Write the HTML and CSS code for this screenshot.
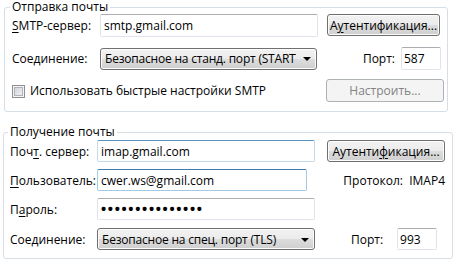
FILE: index.html
```html
<!DOCTYPE html>
<html lang="ru">
<head>
  <meta charset="UTF-8">
  <title>Настройки почты</title>
  <link rel="stylesheet" href="styles.css">
</head>
<body>
  <!-- Отправка почты -->
  <fieldset class="group group-send">
    <legend>Отправка почты</legend>
    <div class="row row-first">
      <label class="caption" for="smtpServer"><u>S</u>MTP-сервер:</label>
      <input class="textbox wide" type="text" id="smtpServer" value="smtp.gmail.com" readonly>
      <button class="btn btn-auth" type="button">А<u>у</u>тентификация...</button>
    </div>
    <div class="row row-conn">
      <span class="caption">Соединение:</span>
      <div class="combo"><span class="combo-text">Безопасное на станд. порт (STARTTLS)</span><span class="combo-arrow"></span></div>
      <span class="port-caption">Порт:</span>
      <input class="textbox port" type="text" value="587" readonly>
    </div>
    <div class="row row-quick">
      <label class="check"><span class="check-box"></span>Использовать быстрые настройки SMTP</label>
      <button class="btn btn-setup" type="button" disabled>Настроить...</button>
    </div>
  </fieldset>

  <!-- Получение почты -->
  <fieldset class="group group-recv">
    <legend>Получение почты</legend>
    <div class="row row-first">
      <label class="caption" for="imapServer">Поч<u>т</u>. сервер:</label>
      <input class="textbox wide hover" type="text" id="imapServer" value="imap.gmail.com" readonly>
      <button class="btn btn-auth" type="button">Аутенти<u>ф</u>икация...</button>
    </div>
    <div class="row">
      <label class="caption" for="user"><u>П</u>ользователь:</label>
      <input class="textbox wide focus" type="text" id="user" value="cwer.ws@gmail.com" readonly>
      <span class="protocol">Протокол:&nbsp; IMAP4</span>
    </div>
    <div class="row">
      <label class="caption" for="pass">П<u>а</u>роль:</label>
      <input class="textbox wide pass" type="password" id="pass" value="xxxxxxxxxxxxxxx" readonly>
    </div>
    <div class="row row-conn">
      <span class="caption">Соединение:</span>
      <div class="combo"><span class="combo-text">Безопасное на спец. порт (TLS)</span><span class="combo-arrow"></span></div>
      <span class="port-caption">Порт:</span>
      <input class="textbox port" type="text" value="993" readonly>
    </div>
  </fieldset>
</body>
</html>
```

FILE: styles.css
```css
/* Общие стили */
body {
  margin: 0;
  background: #fff;
  color: #000;
  font-family: 'Open Sans', 'Noto Sans', sans-serif;
  font-size: 12px;
}
u {
  text-decoration-thickness: 1px;
  text-underline-offset: 2px;
}
/* Группы */
.group {
  box-sizing: border-box;
  min-inline-size: 0;
  border: 1px solid #d5dfe5;
  border-radius: 3px;
}
.group legend {
  padding: 0 2px;
  margin-left: -2px;
  line-height: 14px;
}
.group-send {
  width: 444px;
  margin: 0 0 0 4px;
  padding: 0 6px 9px 7px;
}
.group-recv {
  width: 450px;
  margin: 13px 0 0 3px;
  padding: 0 7px 8px 6px;
}
.row {
  display: flex;
  align-items: center;
  height: 23px;
  white-space: nowrap;
}
.group-send .row-first {
  height: 24px;
  margin-top: -1px;
}
.group-send .row-conn {
  margin-top: 10px;
}
.group-send .row-quick {
  margin-top: 9px;
}
.group-recv .row {
  height: 22px;
  margin-top: 7px;
}
.group-recv .row-first {
  margin-top: 1px;
}
.group-recv .row-conn {
  margin-top: 8px;
}
.caption {
  width: 88px;
  flex: none;
}
.group-recv .caption {
  width: 87px;
}
/* Поля ввода */
.textbox {
  box-sizing: border-box;
  height: 23px;
  margin: 0;
  padding: 0 3px;
  font: inherit;
  color: #000;
  background: #fff;
  border: 1px solid #e2e3ea;
  border-top-color: #abadb3;
  border-radius: 2px;
  outline: none;
}
.group-recv .textbox {
  height: 22px;
}
.textbox.wide {
  width: 218px;
}
.textbox.hover {
  border-color: #c5daed;
  border-top-color: #5794bf;
}
.textbox.focus {
  border-color: #a4c9e3;
  border-top-color: #3d7bad;
}
.textbox.pass {
  font-size: 19px;
  letter-spacing: -0.3px;
  padding-left: 2px;
}
.textbox.port {
  width: 40px;
  padding: 0 2px;
}
/* Кнопки */
.btn {
  box-sizing: border-box;
  height: 22px;
  padding: 0;
  font: inherit;
  color: #000;
  border: 1px solid #707070;
  border-radius: 3px;
  background: linear-gradient(#f2f2f2 0%, #ebebeb 50%, #dddddd 50%, #cfcfcf 100%);
  box-shadow: inset 0 0 0 1px #fcfcfc;
}
.group-send .btn-auth {
  width: 113px;
  margin-left: 9px;
}
.group-recv .btn-auth {
  width: 118px;
  margin-left: 12px;
}
.btn-setup {
  width: 118px;
  height: 23px;
  margin-left: auto;
  margin-right: -3px;
}
.btn:disabled {
  color: #838383;
  border-color: #adb2b5;
  background: #f4f4f4;
  box-shadow: none;
}
/* Выпадающий список */
.combo {
  box-sizing: border-box;
  display: flex;
  align-items: center;
  width: 217px;
  height: 22px;
  padding-left: 4px;
  border: 1px solid #707070;
  border-radius: 3px;
  background: linear-gradient(#f2f2f2 0%, #ebebeb 50%, #dddddd 50%, #cfcfcf 100%);
  box-shadow: inset 0 0 0 1px #fcfcfc;
}
.group-recv .combo {
  width: 218px;
}
.combo-text {
  flex: 1;
  overflow: hidden;
  letter-spacing: -0.2px;
}
.combo-arrow {
  flex: none;
  width: 0;
  height: 0;
  margin: 1px 5px 0 7px;
  border-left: 4px solid transparent;
  border-right: 4px solid transparent;
  border-top: 4px solid #000;
}
.port-caption {
  margin-left: auto;
  margin-right: 6px;
}
.group-recv .port-caption {
  margin-left: 36px;
  margin-right: 14px;
}
.protocol {
  margin-left: 36px;
}
/* Флажок */
.check {
  display: flex;
  align-items: center;
  gap: 5px;
}
.check-box {
  box-sizing: border-box;
  width: 13px;
  height: 13px;
  margin-top: 2px;
  border: 1px solid #8f8f8f;
  background: linear-gradient(135deg, #cbcfd5, #f6f6f6);
  box-shadow: inset 0 0 0 1px #f4f4f4, inset 0 0 0 2px #aeb3b9;
}
```
